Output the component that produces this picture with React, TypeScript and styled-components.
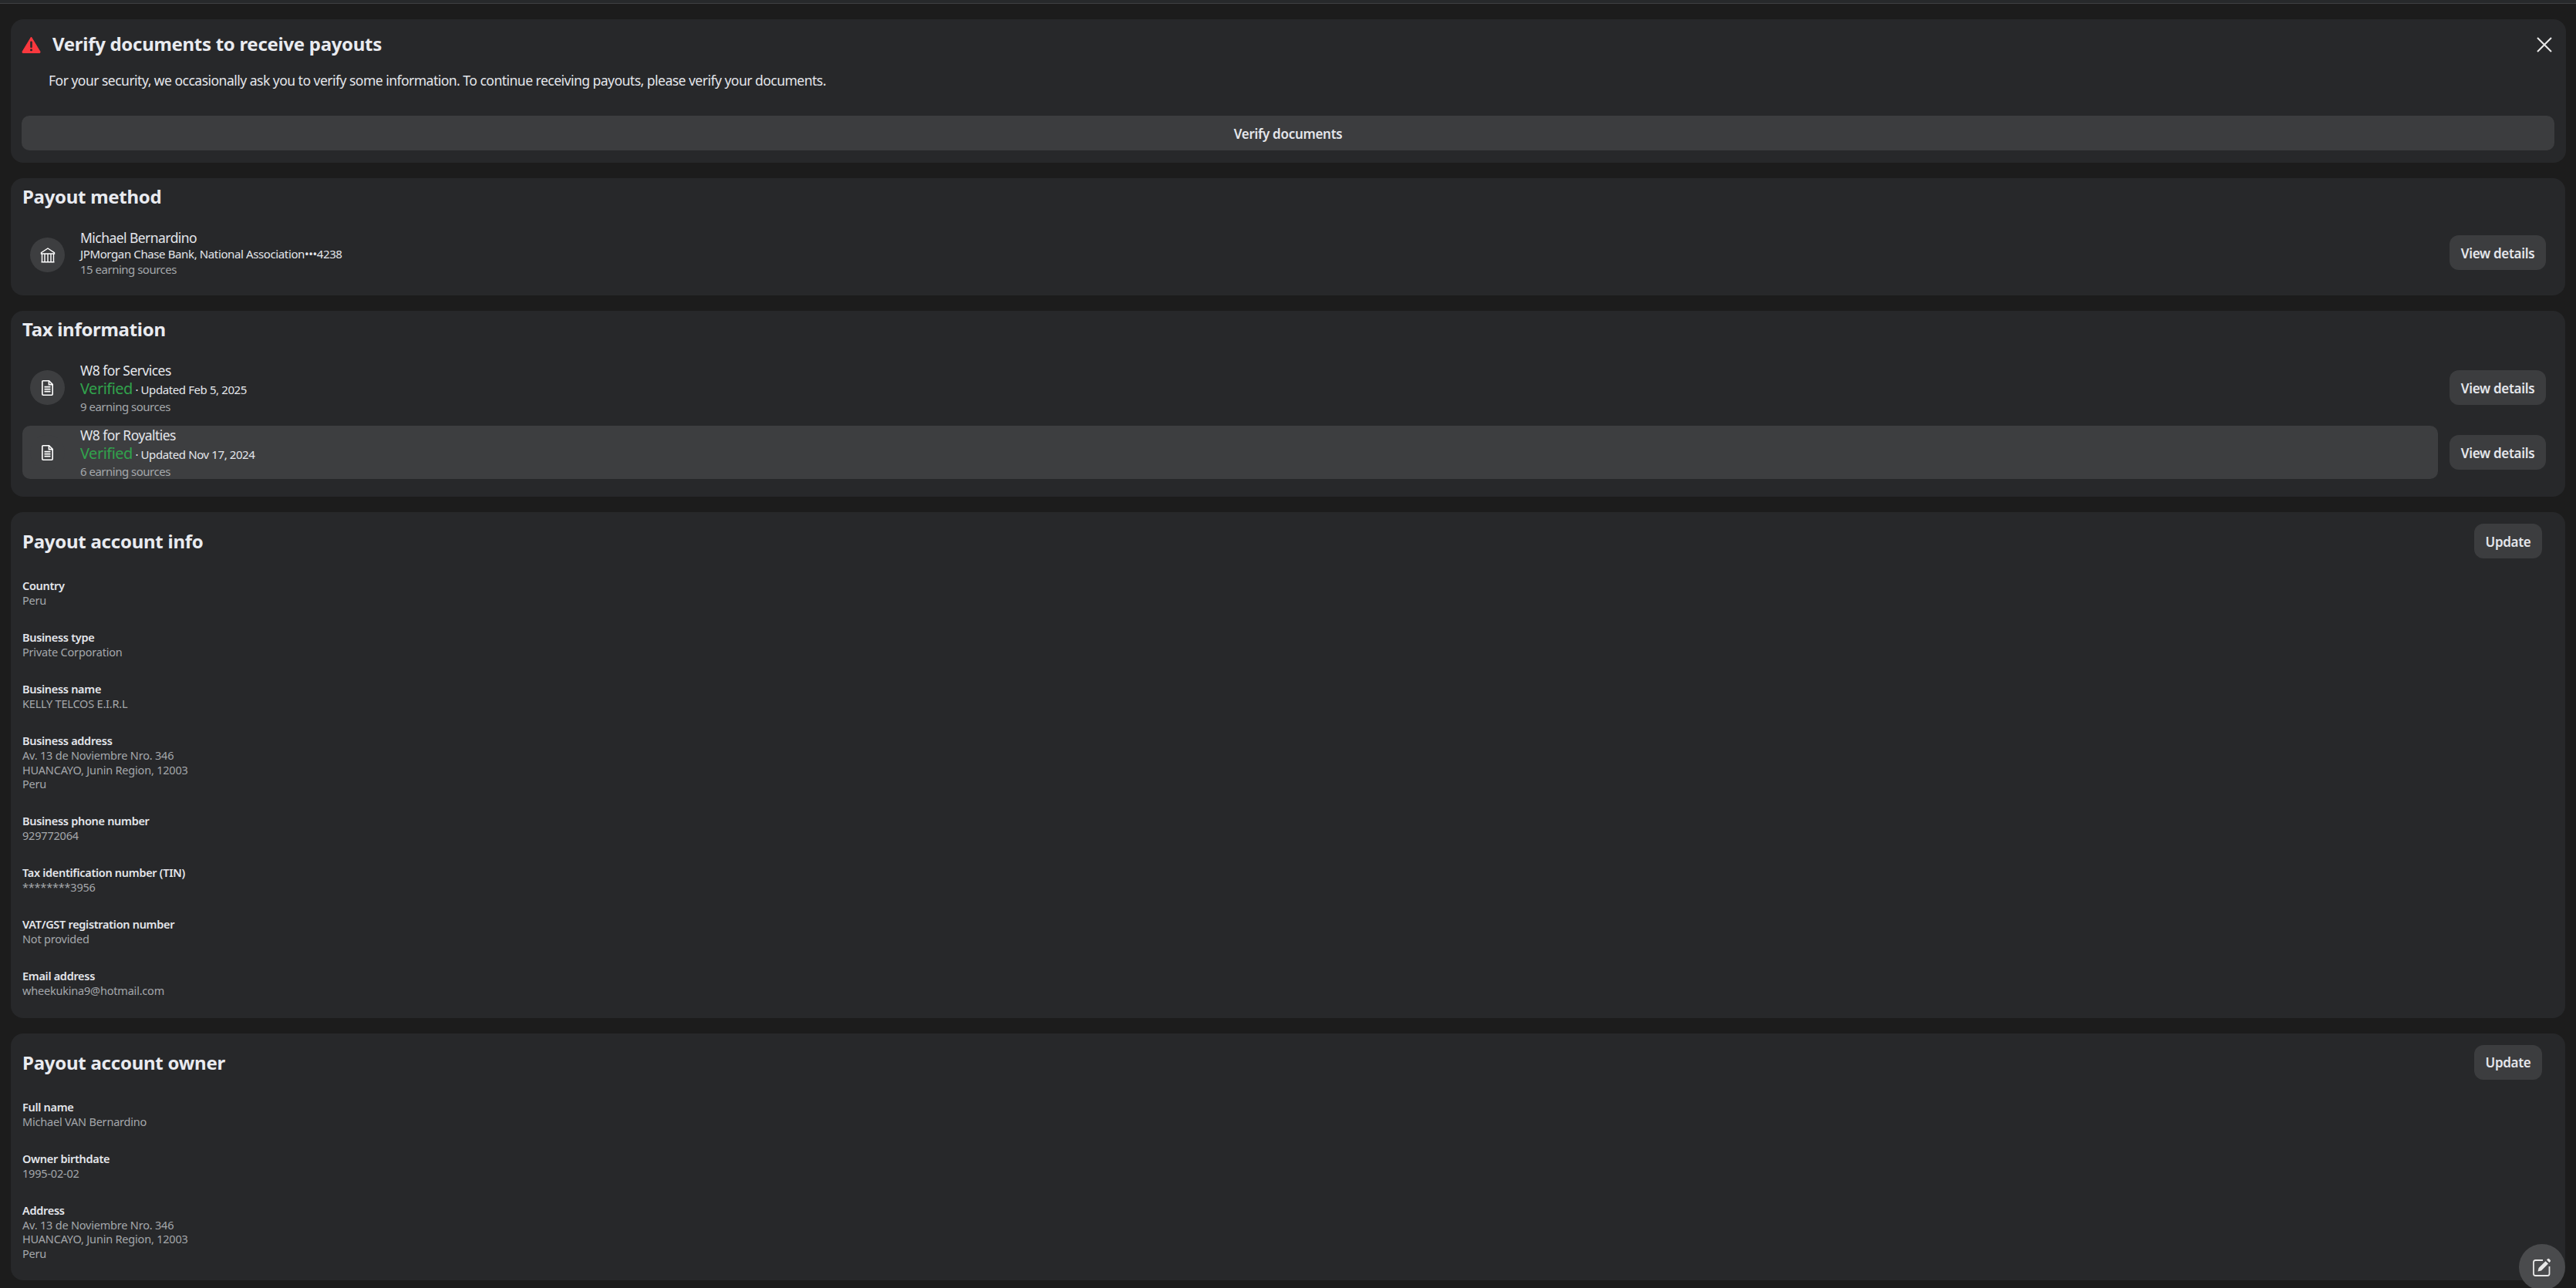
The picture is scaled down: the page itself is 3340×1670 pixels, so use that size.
import React from 'react';
import styled, {createGlobalStyle} from 'styled-components';

type FieldType = {
    label: string
    lines: string[]
}

const accountFields: FieldType[] = [
    {label: 'Country', lines: ['Peru']},
    {label: 'Business type', lines: ['Private Corporation']},
    {label: 'Business name', lines: ['KELLY TELCOS E.I.R.L']},
    {label: 'Business address', lines: ['Av. 13 de Noviembre Nro. 346', 'HUANCAYO, Junin Region, 12003', 'Peru']},
    {label: 'Business phone number', lines: ['929772064']},
    {label: 'Tax identification number (TIN)', lines: ['********3956']},
    {label: 'VAT/GST registration number', lines: ['Not provided']},
    {label: 'Email address', lines: ['wheekukina9@hotmail.com']},
]

const ownerFields: FieldType[] = [
    {label: 'Full name', lines: ['Michael VAN Bernardino']},
    {label: 'Owner birthdate', lines: ['1995-02-02']},
    {label: 'Address', lines: ['Av. 13 de Noviembre Nro. 346', 'HUANCAYO, Junin Region, 12003', 'Peru']},
]

const WarningIcon = () => (
    <svg width="25" height="22" viewBox="0 0 25 22">
        <path d="M12.5 1 L24 20 Q24.5 21.5 23 21.5 L2 21.5 Q0.5 21.5 1 20 Z" fill="#fa383e" stroke="#fa383e" strokeLinejoin="round"/>
        <rect x="11.2" y="6.5" width="2.6" height="8.5" rx="1" fill="#27282a"/>
        <circle cx="12.5" cy="17.8" r="1.5" fill="#27282a"/>
    </svg>
)

const CloseIcon = () => (
    <svg width="20" height="20" viewBox="0 0 20 20">
        <path d="M1 1 L19 19 M19 1 L1 19" stroke="#e8e8e8" strokeWidth="2" fill="none"/>
    </svg>
)

const BankIcon = () => (
    <svg width="20" height="20" viewBox="0 0 20 20" fill="none" stroke="#fff" strokeWidth="1.4">
        <path d="M10 1 L18.5 6.6 V8 H1.5 V6.6 Z"/>
        <path d="M1.5 18.8 H18.5 M2.5 8 V18.8 M17.5 8 V18.8 M6 8 V18.8 M10 8 V18.8 M14 8 V18.8"/>
    </svg>
)

const DocIcon = () => (
    <svg width="15" height="20" viewBox="0 0 15 20" fill="none" stroke="#fff" strokeWidth="1.6">
        <path d="M1.8 0.8 H9.6 L14.2 5.4 V18 Q14.2 19.2 13 19.2 H2 Q0.8 19.2 0.8 18 V1.8 Q0.8 0.8 1.8 0.8 Z"/>
        <path d="M9.4 1 V5.6 H14 M3.5 8.6 H11.5 M3.5 11.6 H11.5 M3.5 14.6 H11.5"/>
    </svg>
)

const EditIcon = () => (
    <svg width="24" height="24" viewBox="0 0 24 24" fill="none">
        <path d="M13 3 H3.5 Q1 3 1 5.5 V20.5 Q1 23 3.5 23 H19 Q21.5 23 21.5 20.5 V11" stroke="#e8e8e8" strokeWidth="1.8"/>
        <path d="M6.5 17.5 L7.6 13 L16.5 4.2 L20 7.6 L11 16.5 Z" fill="#e8e8e8"/>
        <path d="M18 2.6 L19.4 1.2 Q20.2 0.5 21 1.2 L22.8 3 Q23.5 3.8 22.8 4.6 L21.4 6 Z" fill="#e8e8e8"/>
    </svg>
)

const Fields = ({items}: { items: FieldType[] }) => (
    <FieldList>
        {items.map(f => (
            <Field key={f.label}>
                <FieldLabel>{f.label}</FieldLabel>
                {f.lines.map((l, i) => <FieldValue key={i}>{l}</FieldValue>)}
            </Field>
        ))}
    </FieldList>
)

const App = () => {
    return (
        <>
            <GlobalStyle/>
            <TopStrip/>
            <Page>
                <AlertCard>
                    <AlertHead>
                        <WarningIcon/>
                        <AlertTitle>Verify documents to receive payouts</AlertTitle>
                        <CloseButton><CloseIcon/></CloseButton>
                    </AlertHead>
                    <AlertText>For your security, we occasionally ask you to verify some information. To continue receiving payouts, please verify your documents.</AlertText>
                    <WideButton>Verify documents</WideButton>
                </AlertCard>

                <ListCard $bottom={18}>
                    <CardTitle>Payout method</CardTitle>
                    <RowWrap>
                        <Row>
                            <Circle><BankIcon/></Circle>
                            <RowText>
                                <RowName>Michael Bernardino</RowName>
                                <RowSub $compact>JPMorgan Chase Bank, National Association•••4238</RowSub>
                                <RowMuted>15 earning sources</RowMuted>
                            </RowText>
                        </Row>
                        <SmallButton $raised>View details</SmallButton>
                    </RowWrap>
                </ListCard>

                <ListCard $bottom={23}>
                    <CardTitle>Tax information</CardTitle>
                    <RowWrap>
                        <Row>
                            <Circle><DocIcon/></Circle>
                            <RowText>
                                <RowName>W8 for Services</RowName>
                                <RowSub><Verified>Verified</Verified><Updated> · Updated Feb 5, 2025</Updated></RowSub>
                                <RowMuted>9 earning sources</RowMuted>
                            </RowText>
                        </Row>
                        <SmallButton>View details</SmallButton>
                    </RowWrap>
                    <RowWrap>
                        <Row $active>
                            <Circle><DocIcon/></Circle>
                            <RowText>
                                <RowName>W8 for Royalties</RowName>
                                <RowSub><Verified>Verified</Verified><Updated> · Updated Nov 17, 2024</Updated></RowSub>
                                <RowMuted>6 earning sources</RowMuted>
                            </RowText>
                        </Row>
                        <SmallButton>View details</SmallButton>
                    </RowWrap>
                </ListCard>

                <InfoCard>
                    <InfoHead>
                        <InfoTitle>Payout account info</InfoTitle>
                        <UpdateButton>Update</UpdateButton>
                    </InfoHead>
                    <Fields items={accountFields}/>
                </InfoCard>

                <InfoCard>
                    <InfoHead>
                        <InfoTitle>Payout account owner</InfoTitle>
                        <UpdateButton>Update</UpdateButton>
                    </InfoHead>
                    <Fields items={ownerFields}/>
                </InfoCard>
            </Page>
            <Fab><EditIcon/></Fab>
        </>
    );
};

export default App;

const GlobalStyle = createGlobalStyle`
    html, body {
        margin: 0;
        height: 100%;
        overflow: hidden;
        background: #1c1c1c;
        color: #e4e6eb;
        font-family: "Noto Sans", "Open Sans", sans-serif;
    }
    * {
        box-sizing: border-box;
    }
`

const TopStrip = styled.div`
    height: 5px;
    background: #27292b;
    border-bottom: 1px solid #3e3f41;
`

const Page = styled.div`
    display: flex;
    flex-direction: column;
    gap: 20px;
    padding: 20px 14px 0;
`

const Card = styled.section`
    background: #27282a;
    border-radius: 16px;
`

const AlertCard = styled(Card)`
    height: 186px;
    margin-right: -1px;
    padding: 21px 15px 16px 14px;
`

const AlertHead = styled.div`
    display: flex;
    align-items: center;
    gap: 15px;
    height: 24px;
`

const AlertTitle = styled.h2`
    margin: -3px 0 0;
    font-size: 24px;
    font-weight: 700;
    letter-spacing: -0.3px;
    color: #e9ebf0;
`

const CloseButton = styled.div`
    display: flex;
    margin-left: auto;
    margin-right: 3px;
`

const AlertText = styled.p`
    margin: 0;
    padding: 22px 0 0 35px;
    height: 60px;
    font-size: 17.5px;
    line-height: 24px;
    letter-spacing: -0.51px;
    color: #e4e6eb;
`

const WideButton = styled.div`
    display: flex;
    align-items: center;
    justify-content: center;
    height: 45px;
    margin-top: 20px;
    padding-top: 1px;
    background: #3c3d3f;
    border-radius: 10px;
    font-size: 17px;
    font-weight: 600;
    letter-spacing: -0.3px;
    color: #e4e6eb;
`

const ListCard = styled(Card)<{ $bottom: number }>`
    display: flex;
    flex-direction: column;
    gap: 15px;
    padding: 0 15px ${p => p.$bottom}px;
`

const CardTitle = styled.h2`
    margin: 0 0 -1px;
    height: 51px;
    padding-top: 6px;
    font-size: 24px;
    line-height: 36px;
    font-weight: 700;
    letter-spacing: -0.3px;
    color: #e9ebf0;
`

const RowWrap = styled.div`
    display: flex;
    align-items: center;
    gap: 15px;
`

const Row = styled.div<{ $active?: boolean }>`
    flex: 1;
    display: flex;
    align-items: center;
    gap: 20px;
    height: 69px;
    padding-left: 10px;
    border-radius: 10px;
    background: ${p => (p.$active ? '#3d3e40' : 'transparent')};
`

const Circle = styled.div`
    display: flex;
    align-items: center;
    justify-content: center;
    width: 45px;
    height: 45px;
    border-radius: 50%;
    background: #3d3e40;
`

const RowText = styled.div`
    display: flex;
    flex-direction: column;
    height: 69px;
    padding-top: 1px;
`

const RowName = styled.div`
    font-size: 17.5px;
    line-height: 23px;
    letter-spacing: -0.55px;
    color: #e4e6eb;
`

const RowSub = styled.div<{ $compact?: boolean }>`
    font-size: 15px;
    line-height: ${p => (p.$compact ? 19 : 24)}px;
    letter-spacing: -0.38px;
    color: #e4e6eb;
`

const Verified = styled.span`
    font-size: 20px;
    letter-spacing: -0.5px;
    color: #31a24c;
`

const Updated = styled.span`
    letter-spacing: -0.4px;
`

const RowMuted = styled.div`
    font-size: 15px;
    line-height: 21px;
    letter-spacing: -0.5px;
    color: #a4a7ab;
`

const SmallButton = styled.div<{ $raised?: boolean }>`
    display: flex;
    align-items: center;
    justify-content: center;
    width: 125px;
    height: 45px;
    margin-right: 10px;
    margin-bottom: ${p => (p.$raised ? 6 : 0)}px;
    padding-top: 1px;
    border-radius: 12px;
    background: #3c3d3f;
    font-size: 17px;
    font-weight: 600;
    letter-spacing: -0.3px;
    color: #e4e6eb;
`

const InfoCard = styled(Card)`
    padding: 15px 30px 26px 15px;
`

const InfoHead = styled.div`
    display: flex;
    align-items: center;
    justify-content: space-between;
    height: 45px;
`

const InfoTitle = styled.h2`
    margin: 0;
    font-size: 24px;
    font-weight: 700;
    letter-spacing: -0.25px;
    color: #e9ebf0;
`

const UpdateButton = styled(SmallButton)`
    width: 88px;
    margin-right: 0;
`

const FieldList = styled.div`
    display: flex;
    flex-direction: column;
    gap: 28.5px;
    margin-top: 25px;
`

const Field = styled.div`
    display: flex;
    flex-direction: column;
`

const FieldLabel = styled.div`
    font-size: 14.5px;
    line-height: 20px;
    font-weight: 600;
    letter-spacing: -0.3px;
    color: #e4e6eb;
`

const FieldValue = styled.div`
    font-size: 14.5px;
    line-height: 18.5px;
    letter-spacing: -0.2px;
    color: #a4a7ab;
`

const Fab = styled.div`
    position: fixed;
    right: 14px;
    bottom: -3px;
    display: flex;
    align-items: center;
    justify-content: center;
    width: 60px;
    height: 60px;
    border-radius: 50%;
    background: #4a4b4d;
`
